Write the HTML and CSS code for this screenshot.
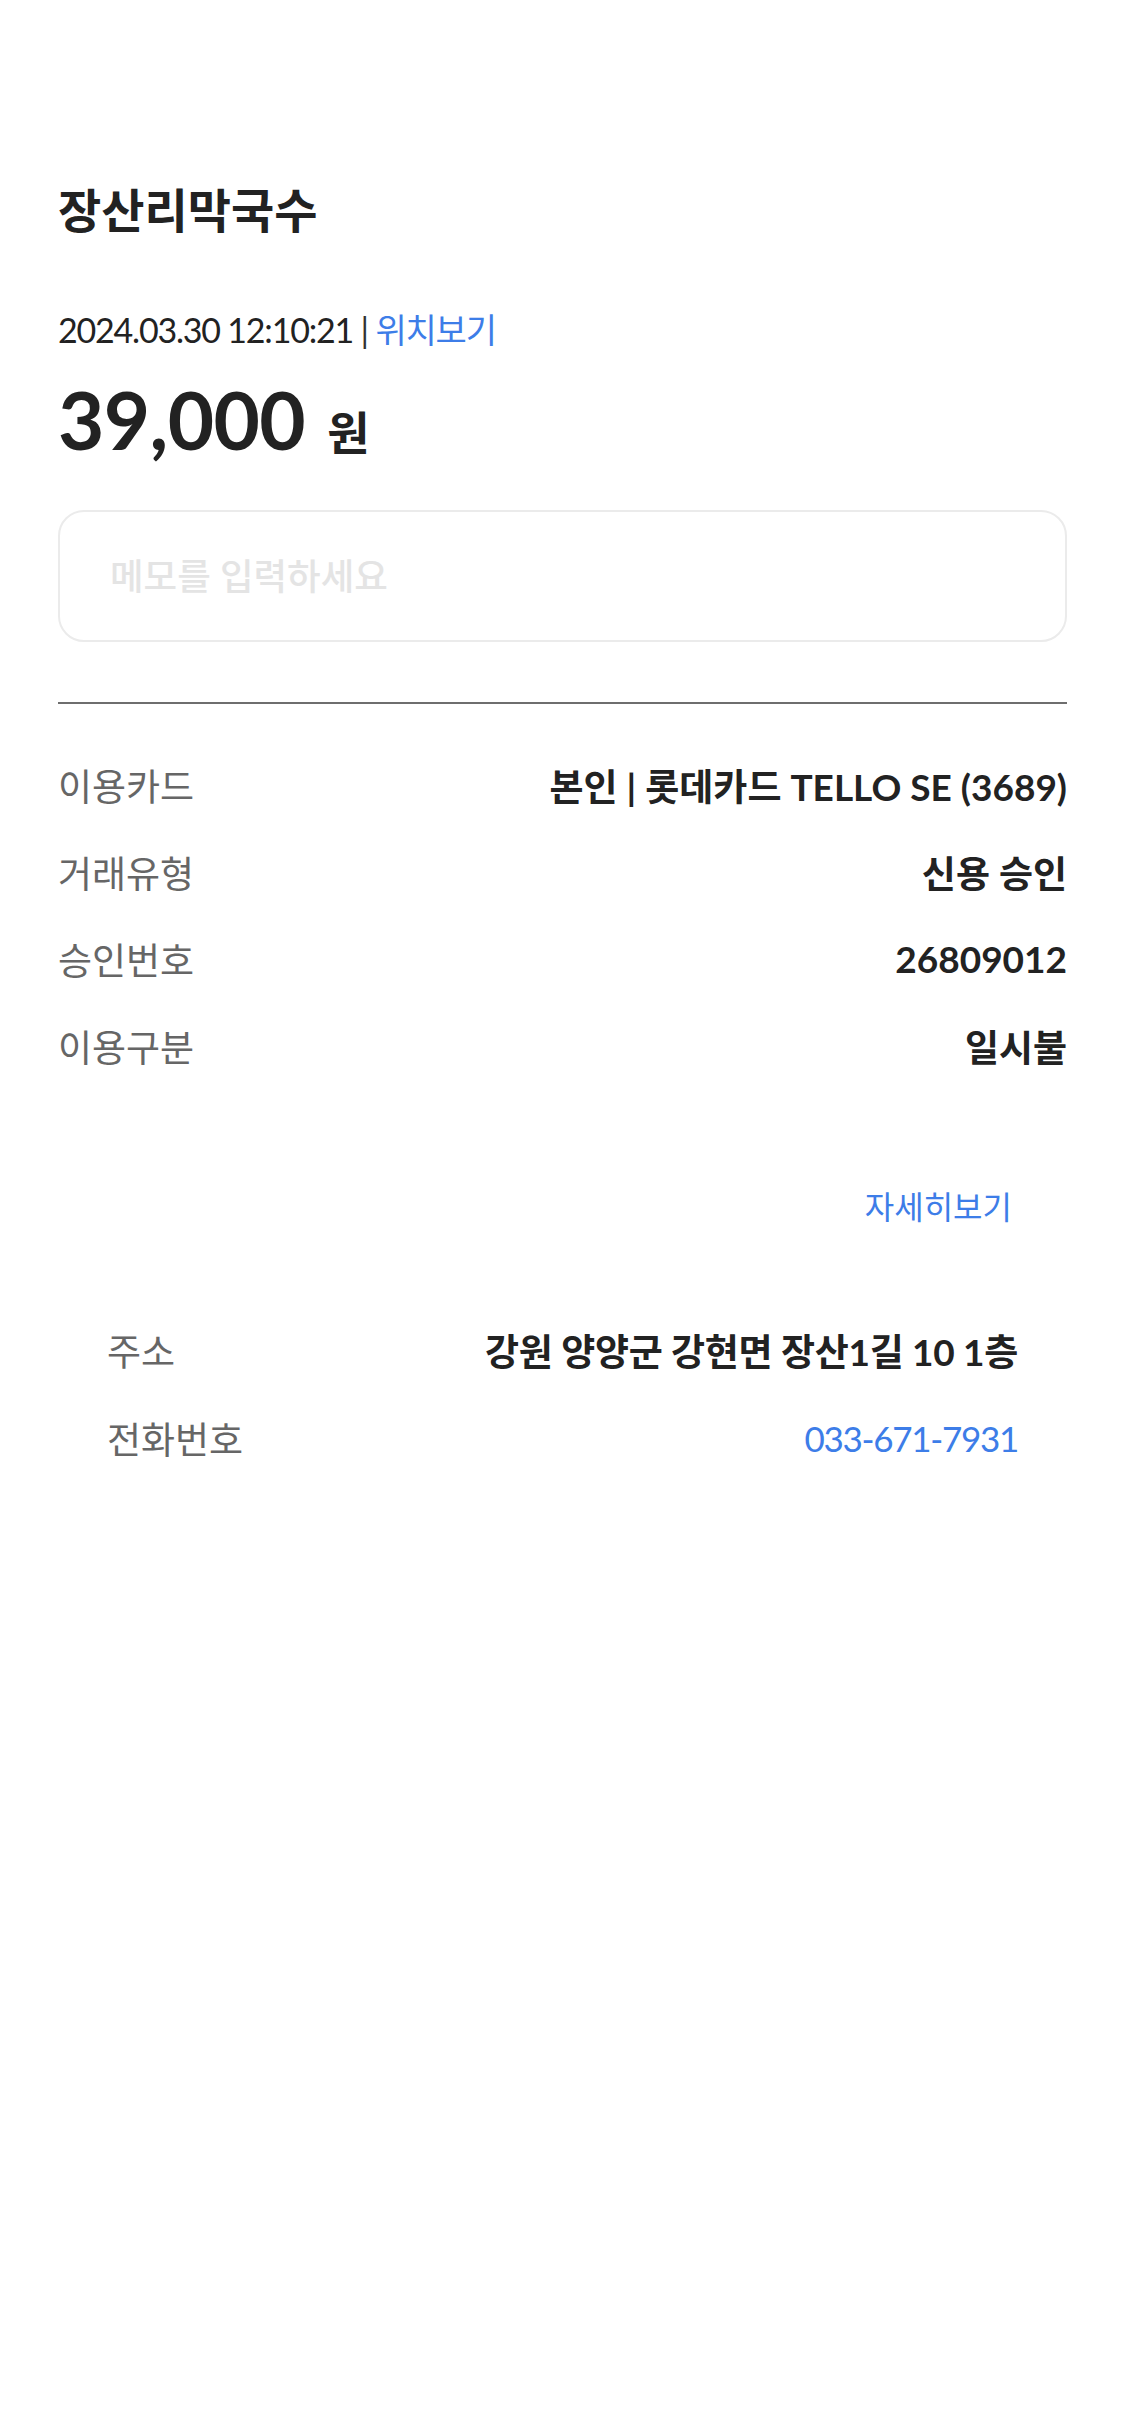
FILE: index.html
```html
<!DOCTYPE html>
<html lang="ko">
<head>
<meta charset="utf-8">
<title>장산리막국수</title>
<link rel="stylesheet" href="styles.css">
</head>
<body>
<main class="page">
  <h1 class="title">장산리막국수</h1>
  <p class="meta"><span class="datetime">2024.03.30 12:10:21</span> <span class="sep">|</span> <a class="link" href="#">위치보기</a></p>
  <p class="amount"><span class="amount-num">39,000</span><span class="amount-unit">원</span></p>
  <div class="memo"><input class="memo-input" type="text" placeholder="메모를 입력하세요"></div>
  <hr class="divider">
  <dl class="info">
    <div class="row"><dt class="label">이용카드</dt><dd class="value">본인 | 롯데카드 TELLO SE (3689)</dd></div>
    <div class="row"><dt class="label">거래유형</dt><dd class="value">신용 승인</dd></div>
    <div class="row"><dt class="label">승인번호</dt><dd class="value">26809012</dd></div>
    <div class="row"><dt class="label">이용구분</dt><dd class="value">일시불</dd></div>
  </dl>
  <div class="more"><a class="more-link" href="#">자세히보기</a></div>
  <dl class="store">
    <div class="row"><dt class="label">주소</dt><dd class="value">강원 양양군 강현면 장산1길 10 1층</dd></div>
    <div class="row"><dt class="label">전화번호</dt><dd class="value phone">033-671-7931</dd></div>
  </dl>
</main>
</body>
</html>
```

FILE: styles.css
```css
* { box-sizing: border-box; }
html, body { margin: 0; padding: 0; background: #fff; }
body {
  font-family: Lato, "Noto Sans CJK KR", sans-serif;
  color: #222;
  width: 1125px;
  min-height: 2436px;
}
.page {
  padding: 180px 58px 0;
  display: flex;
  flex-direction: column;
}
.title {
  margin: 0;
  font-size: 47px;
  line-height: 60px;
  font-weight: 700;
  letter-spacing: 0;
}
.meta {
  margin: 68px 0 0;
  font-size: 34px;
  line-height: 44px;
  letter-spacing: -1.2px;
  color: #222;
}
.sep { color: #333; }
.link { color: #3d7de8; text-decoration: none; }
.amount {
  margin: 19px 0 0;
  display: flex;
  align-items: baseline;
  line-height: 96px;
}
.amount-num {
  font-size: 80px;
  font-weight: 700;
  letter-spacing: -0.6px;
}
.amount-unit {
  font-size: 46px;
  font-weight: 700;
  margin-left: 22px;
}
.memo {
  margin-top: 29px;
  height: 132px;
  border: 2px solid #ebebeb;
  border-radius: 26px;
  display: flex;
  align-items: center;
  padding: 0 50px;
}
.memo-input {
  border: 0;
  outline: 0;
  width: 100%;
  font-family: Lato, "Noto Sans CJK KR", sans-serif;
  font-size: 36.5px;
  font-weight: 500;
  background: transparent;
  padding: 0;
  color: #222;
}
.memo-input::placeholder { color: #e4e4e4; }
.divider {
  margin: 60px 0 0;
  border: 0;
  height: 2px;
  background: #6e6e6e;
}
.info { margin: 37px 0 0; }
.row {
  display: flex;
  justify-content: space-between;
  align-items: center;
  height: 87px;
}
.label {
  font-size: 37px;
  color: #666;
  margin: 0;
}
.value {
  margin: 0;
  font-size: 37px;
  font-weight: 700;
  color: #222;
}
.more {
  margin-top: 98px;
  display: flex;
  justify-content: flex-end;
  padding-right: 55px;
}
.more-link {
  font-size: 32px;
  line-height: 40px;
  color: #3d7de8;
  text-decoration: none;
}
.store {
  margin: 79px 0 0;
  padding: 0 49px;
}
.store .row { height: 88px; }
.store .value { letter-spacing: -0.3px; }
.store .phone {
  color: #3d7de8;
  font-weight: 400;
  font-size: 35px;
  letter-spacing: -1.3px;
}
```
